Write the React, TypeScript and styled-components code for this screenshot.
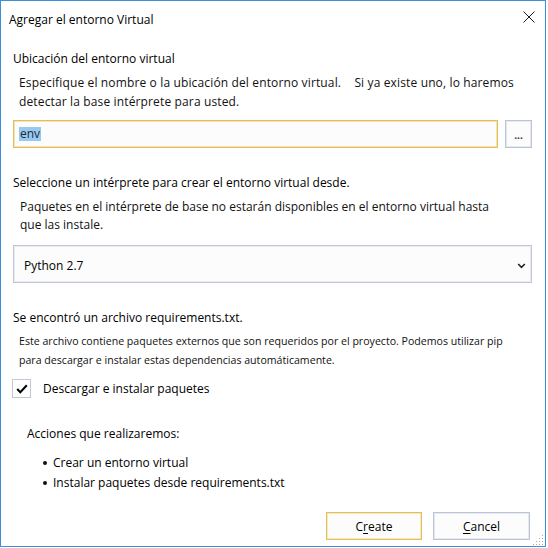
import React from "react";
import styled, { createGlobalStyle } from "styled-components";

const GlobalStyle = createGlobalStyle`
  html, body { margin: 0; padding: 0; background: #ffffff; }
  body {
    font-family: "Open Sans", "Noto Sans", sans-serif;
    font-size: 12px;
    color: #000000;
  }
`;

const Window = styled.div`
  width: 546px;
  height: 547px;
  box-sizing: border-box;
  border: 1px solid #3b8fd9;
  background: #ffffff;
  display: flex;
  flex-direction: column;
  position: relative;
`;

const TitleBar = styled.div`
  display: flex;
  justify-content: space-between;
  align-items: flex-start;
  padding: 9px 10px 0 8px;
`;

const Title = styled.div`
  font-size: 12px;
  line-height: 19px;
  color: #000;
`;

const CloseButton = styled.div`
  width: 12px;
  height: 12px;
  margin-top: 1px;
  display: flex;
`;

const Content = styled.div`
  display: flex;
  flex-direction: column;
  padding: 0 13px 0 12px;
`;

const SectionTitle = styled.div<{ $top: number; $indent?: number }>`
  margin-top: ${(p) => p.$top}px;
  padding-left: ${(p) => p.$indent ?? 0}px;
  font-size: 12px;
  line-height: 19px;
  color: #000;
`;

const Desc = styled.div<{ $top: number; $indent: number; $size?: number; $lh?: number; $ls?: number }>`
  margin-top: ${(p) => p.$top}px;
  padding-left: ${(p) => p.$indent}px;
  font-size: ${(p) => p.$size ?? 12}px;
  line-height: ${(p) => p.$lh ?? 19}px;
  letter-spacing: ${(p) => p.$ls ?? 0}px;
  color: #111;
`;

const Gap = styled.span`
  display: inline-block;
  width: 10px;
`;

const InputRow = styled.div`
  margin-top: 9px;
  display: flex;
  gap: 7px;
  height: 28px;
`;

const TextField = styled.div`
  flex: 1;
  box-sizing: border-box;
  border: 1px solid #e3bf5c;
  box-shadow: inset 0 0 0 1px #f4e3b3;
  background: #fcfcfc;
  display: flex;
  align-items: center;
  padding-left: 5px;
`;

const Selected = styled.span`
  background: #99c9ef;
  color: #1b2a3d;
  font-size: 12px;
  line-height: 14px;
  padding: 0 1px;
`;

const BrowseButton = styled.div`
  width: 27px;
  box-sizing: border-box;
  border: 1px solid #bcc3d6;
  box-shadow: inset 0 0 0 1px #e6e9f0;
  background: #fcfcfc;
  display: flex;
  justify-content: center;
  align-items: flex-end;
  padding-bottom: 6px;
  font-size: 10px;
  line-height: 12px;
  font-weight: 700;
  color: #333;
`;

const Select = styled.div`
  margin-top: 11px;
  height: 38px;
  box-sizing: border-box;
  border: 1px solid #c1c7d8;
  box-shadow: inset 0 0 0 1px #e9ebf2;
  background: #fcfcfc;
  display: flex;
  align-items: center;
  justify-content: space-between;
  padding: 3px 5px 0 10px;
`;

const SelectText = styled.span`
  font-size: 12px;
  color: #000;
`;

const CheckRow = styled.div`
  margin-top: 9px;
  margin-left: -1px;
  display: flex;
  align-items: center;
  gap: 12px;
  height: 19px;
`;

const CheckBox = styled.div`
  width: 19px;
  height: 19px;
  box-sizing: border-box;
  border: 1px solid #c3c8d6;
  background: #fff;
  display: flex;
  align-items: center;
  justify-content: center;
`;

const CheckLabel = styled.span`
  font-size: 12px;
  line-height: 19px;
`;

const BulletList = styled.ul`
  list-style: none;
  margin: 10px 0 0 0;
  padding: 0 0 0 29px;
`;

const BulletItem = styled.li`
  display: flex;
  align-items: center;
  height: 20px;
  font-size: 12px;
  line-height: 20px;
`;

const Bullet = styled.span`
  width: 4px;
  height: 4px;
  border-radius: 50%;
  background: #111;
  margin: 0 6px 1px 1px;
`;

const Footer = styled.div`
  margin-top: auto;
  display: flex;
  justify-content: flex-end;
  gap: 11px;
  padding: 0 15px 6px 0;
`;

const DialogButton = styled.div<{ $primary?: boolean; $w: number }>`
  width: ${(p) => p.$w}px;
  height: 28px;
  box-sizing: border-box;
  border: 1px solid ${(p) => (p.$primary ? "#e3bf5c" : "#bcc3d6")};
  box-shadow: inset 0 0 0 1px ${(p) => (p.$primary ? "#f6e8c0" : "#e6e9f0")};
  background: #fcfcfc;
  display: flex;
  align-items: center;
  justify-content: center;
  font-size: 12px;
  color: #000;
`;

const Mnemonic = styled.span`
  text-decoration: underline;
  text-underline-offset: 2px;
`;

const Grip = styled.div`
  position: absolute;
  right: 1px;
  bottom: 1px;
  width: 11px;
  height: 11px;
  display: flex;
`;

export default function App() {
  const gripDots: [number, number][] = [
    [9, 1],
    [9, 4], [6, 4],
    [9, 7], [6, 7], [3, 7],
    [9, 10], [6, 10], [3, 10], [0, 10],
  ];
  return (
    <>
      <GlobalStyle />
      <Window>
        <TitleBar>
          <Title>Agregar el entorno Virtual</Title>
          <CloseButton>
            <svg width="12" height="12" viewBox="0 0 12 12">
              <path d="M0.5 0.5 L11.5 11.5 M11.5 0.5 L0.5 11.5" stroke="#1a1a1a" strokeWidth="1" fill="none" />
            </svg>
          </CloseButton>
        </TitleBar>
        <Content>
          <SectionTitle $top={20}>Ubicación del entorno virtual</SectionTitle>
          <Desc $top={5} $indent={6} $ls={0.14}>
            Especifique el nombre o la ubicación del entorno virtual.
            <Gap /> Si ya existe uno, lo haremos
            <br />
            detectar la base intérprete para usted.
          </Desc>
          <InputRow>
            <TextField>
              <Selected>env</Selected>
            </TextField>
            <BrowseButton>...</BrowseButton>
          </InputRow>
          <SectionTitle $top={25}>Seleccione un intérprete para crear el entorno virtual desde.</SectionTitle>
          <Desc $top={6} $indent={7} $lh={18}>
            Paquetes en el intérprete de base no estarán disponibles en el entorno virtual hasta
            <br />
            que las instale.
          </Desc>
          <Select>
            <SelectText>Python 2.7</SelectText>
            <svg width="9" height="6" viewBox="0 0 9 6">
              <path d="M1.2 1 L4.5 4.3 L7.8 1" stroke="#222" strokeWidth="1.6" fill="none" />
            </svg>
          </Select>
          <SectionTitle $top={25}>Se encontró un archivo requirements.txt.</SectionTitle>
          <Desc $top={5} $indent={6} $size={10.6}>
            Este archivo contiene paquetes externos que son requeridos por el proyecto. Podemos utilizar pip
            <br />
            para descargar e instalar estas dependencias automáticamente.
          </Desc>
          <CheckRow>
            <CheckBox>
              <svg width="12" height="10" viewBox="0 0 12 10">
                <path d="M1.2 5 L4.3 8.2 L10.8 1.2" stroke="#000" strokeWidth="2" fill="none" />
              </svg>
            </CheckBox>
            <CheckLabel>Descargar e instalar paquetes</CheckLabel>
          </CheckRow>
          <SectionTitle $top={26} $indent={14}>Acciones que realizaremos:</SectionTitle>
          <BulletList>
            <BulletItem>
              <Bullet />Crear un entorno virtual
            </BulletItem>
            <BulletItem>
              <Bullet />Instalar paquetes desde requirements.txt
            </BulletItem>
          </BulletList>
        </Content>
        <Footer>
          <DialogButton $primary $w={96}>
            C<Mnemonic>r</Mnemonic>eate
          </DialogButton>
          <DialogButton $w={97}>
            <Mnemonic>C</Mnemonic>ancel
          </DialogButton>
        </Footer>
        <Grip>
          <svg width="11" height="11" viewBox="0 0 11 11">
            {gripDots.map(([x, y], i) => (
              <rect key={i} x={x} y={y} width="1" height="1" fill="#a9a9a9" />
            ))}
          </svg>
        </Grip>
      </Window>
    </>
  );
}
